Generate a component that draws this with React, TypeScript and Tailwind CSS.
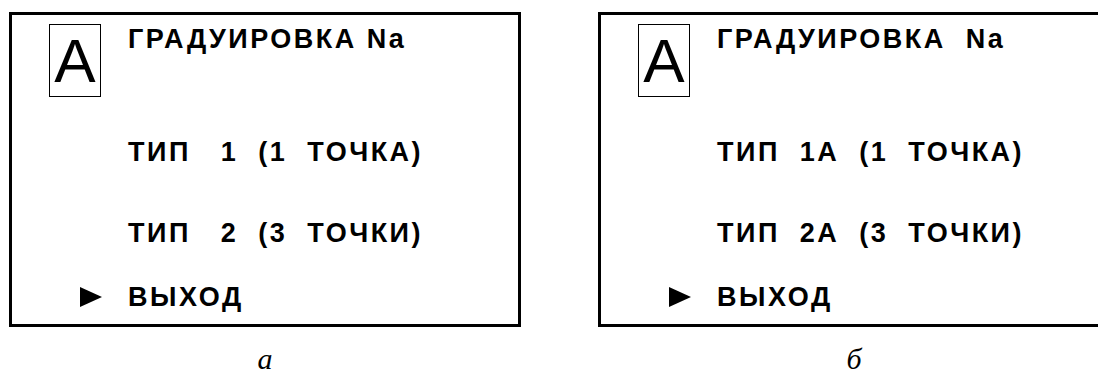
import React from 'react';

type Panel = {
  title: string;
  items: string[];
  caption: string;
};

const panels: Panel[] = [
  {
    title: 'ГРАДУИРОВКА Na',
    items: ['ТИП   1  (1  ТОЧКА)', 'ТИП   2  (3  ТОЧКИ)'],
    caption: 'а',
  },
  {
    title: 'ГРАДУИРОВКА  Na',
    items: ['ТИП  1А  (1  ТОЧКА)', 'ТИП  2А  (3  ТОЧКИ)'],
    caption: 'б',
  },
];

const MenuScreen: React.FC<{ panel: Panel }> = ({ panel }) => {
  return (
    <div className="flex flex-col shrink-0 w-[512px]">
      {/* Display frame */}
      <div className="w-[512px] h-[315px] border-[3px] border-black flex flex-col">
        <div className="flex items-start mt-[9px]">
          <div className="ml-[37px] w-[52px] h-[73px] border-[1.5px] border-black flex items-center justify-center">
            <span className="text-[62px] leading-none font-normal">A</span>
          </div>
          <div className="ml-[27px] text-[27px] leading-[30px] font-bold tracking-[2.5px] whitespace-pre">
            {panel.title}
          </div>
        </div>

        <div className="mt-[40px] pl-[116px] text-[27px] leading-[30px] font-bold tracking-[2.5px] whitespace-pre">
          {panel.items[0]}
        </div>
        <div className="mt-[51px] pl-[116px] text-[27px] leading-[30px] font-bold tracking-[2.5px] whitespace-pre">
          {panel.items[1]}
        </div>

        {/* Exit row with cursor */}
        <div className="mt-[34px] flex items-center text-[27px] leading-[30px] font-bold tracking-[2.5px]">
          <svg className="ml-[68px] w-[22px] h-[20px]" viewBox="0 0 22 20">
            <polygon points="0,0 22,10 0,20" fill="black" />
          </svg>
          <span className="ml-[26px]">ВЫХОД</span>
        </div>
      </div>

      <div className="mt-[17px] text-center text-[30px] leading-[30px] italic font-['Liberation_Serif',serif]">
        {panel.caption}
      </div>
    </div>
  );
};

export default function App() {
  return (
    <div className="w-[1098px] h-[376px] bg-white text-black overflow-hidden font-['Liberation_Sans',Arial,sans-serif]">
      <div className="flex gap-[77px] pt-[12px] pl-[9px]">
        {panels.map((p) => (
          <MenuScreen key={p.caption} panel={p} />
        ))}
      </div>
    </div>
  );
}
